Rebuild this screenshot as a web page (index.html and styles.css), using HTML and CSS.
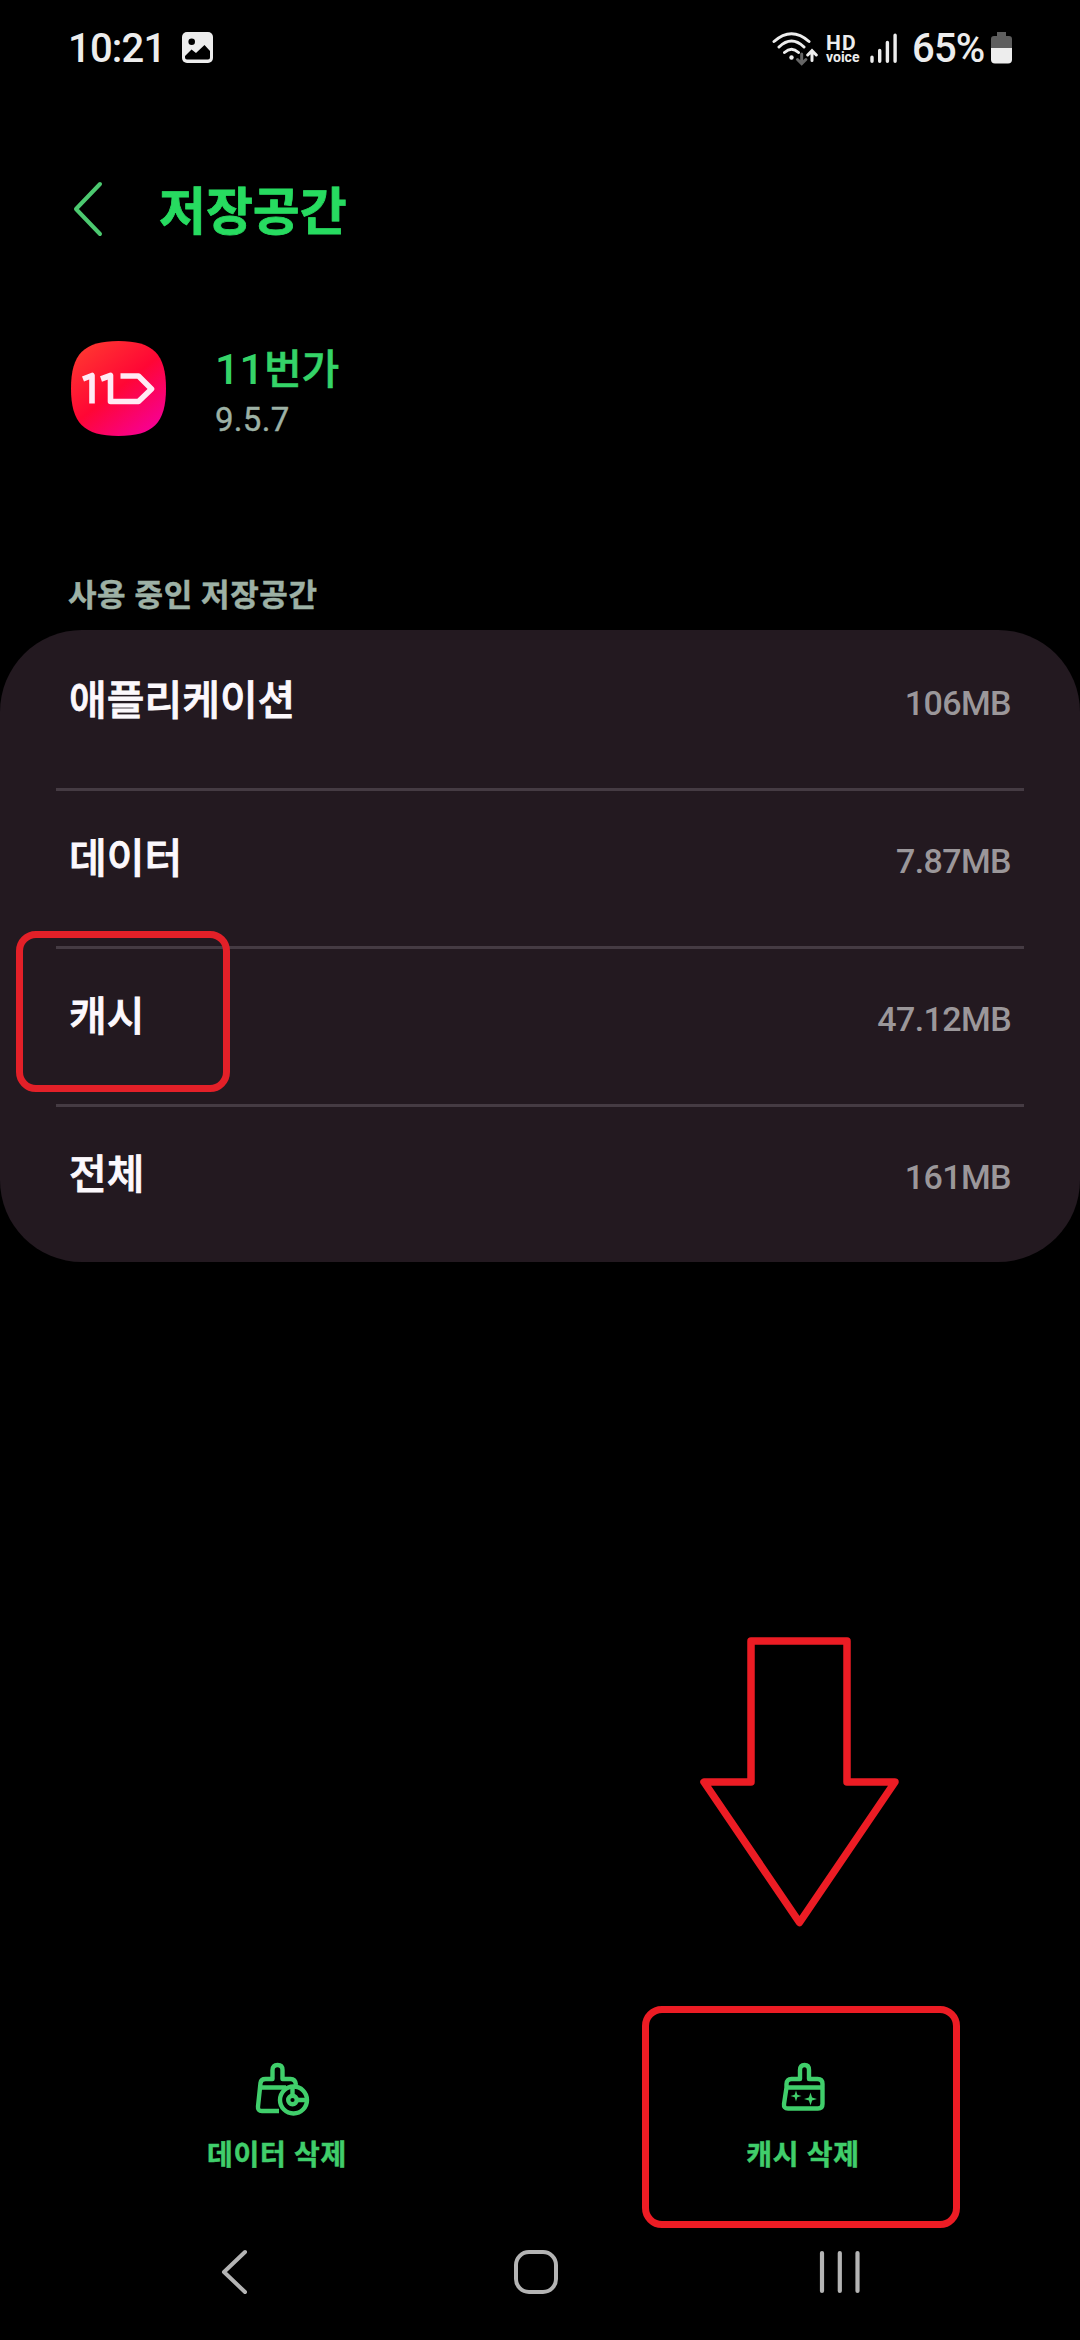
FILE: index.html
```html
<!DOCTYPE html>
<html lang="ko">
<head>
<meta charset="utf-8">
<title>저장공간</title>
<link rel="stylesheet" href="styles.css">
</head>
<body>
<div class="screen">
  <header class="status">
    <div class="status-side">
      <span class="clock">10:21</span>
      <svg class="photo" width="32" height="32" viewBox="0 0 32 32"><rect width="31" height="31" rx="5" fill="#ededed"/><circle cx="9.7" cy="9.7" r="3.3" fill="#000"/><path d="M3 24l6.500-6.500 4.500 3.500 8.500-8 5.500 6v6.500q0 2-2 2h-21q-2 0-2-2z" fill="#000"/></svg>
    </div>
    <div class="status-side">
      <svg width="46" height="36" viewBox="0 0 46 36" fill="none" stroke-linecap="round" stroke-width="3"><g stroke="#ededed"><path d="M2 11.500Q19.500-4 37 11.500M7 17Q19.500 5 32 17M12.500 22.500Q19.500 16 26.500 22.500"/></g><circle cx="19.500" cy="27.500" r="2.200" fill="#ededed"/><path d="M29.700 24v8M25.500 29.500l4.200 4.200 4.200-4.200" stroke="#666"/><path d="M40 30.500v-9M35.700 25l4.300-4.300 4.300 4.300" stroke="#ededed"/></svg>
      <span class="hd"><b>HD</b><small>voice</small></span>
      <svg class="signal" width="28" height="32" viewBox="0 0 28 32" stroke="#ededed" stroke-width="3.400" stroke-linecap="round"><path d="M2 25.200v4M9.700 18.500v10.700M17.400 10.500v18.700M25.100 3.200v26"/></svg>
      <span class="percent">65%</span>
      <svg class="battery" width="22" height="32" viewBox="0 0 22 32"><path d="M6 0h9v4h3q3 0 3 3v10H0V7q0-3 3-3h3z" fill="#5e5e5e"/><path d="M0 16h21v11.500q0 4-4 4H4q-4 0-4-4z" fill="#ededed"/></svg>
    </div>
  </header>

  <div class="titlebar">
    <svg width="30" height="56" viewBox="0 0 30 56" fill="none" stroke="#4cc970" stroke-width="4" stroke-linecap="round" stroke-linejoin="round"><path d="M27 3L3 28l24 25"/></svg>
    <h1>저장공간</h1>
  </div>

  <section class="app">
    <svg width="96" height="96" viewBox="0 0 96 96"><defs><linearGradient id="brand" x1=".1" y1="0" x2=".9" y2="1"><stop offset="0" stop-color="#ff3b30"/><stop offset=".5" stop-color="#ff0635"/><stop offset="1" stop-color="#f500a0"/></linearGradient></defs><path d="M47.500 0C82 0 95 13 95 47.500S82 95 47.500 95 0 82 0 47.500 13 0 47.500 0z" fill="url(#brand)"/><path d="M12 38L21 34.500v28M30 38L39.500 34.500v26h28L80.500 48 67.500 35h-18" fill="none" stroke="#ffeaf4" stroke-width="5.600" stroke-linejoin="round"/></svg>
    <div class="app-text"><div class="app-name"><span>11</span>번가</div><div class="version">9.5.7</div></div>
  </section>

  <h2>사용 중인 저장공간</h2>
  <section class="card">
    <div class="row"><span class="label">애플리케이션</span><span class="value">106MB</span></div>
    <div class="row"><span class="label">데이터</span><span class="value">7.87MB</span></div>
    <div class="row"><span class="label">캐시</span><span class="value">47.12MB</span></div>
    <div class="row"><span class="label">전체</span><span class="value">161MB</span></div>
  </section>

  <footer class="actions">
    <div class="action">
      <svg class="with-badge" width="56" height="56" viewBox="0 0 56 56" fill="none" stroke="#40ce6b" stroke-width="4.400" stroke-linejoin="round"><path d="M24 49H7q-4.500 0-4-4.500L5.500 21q.500-4 5-4h7V8q0-5 5-5t5 5v9h8q5 0 5.500 6M5 25.500h26"/><circle cx="38.500" cy="38" r="13.500"/><circle cx="37.500" cy="38" r="4.300"/><path d="M37.500 33.500V24M42 38h9"/></svg>
      <span>데이터 삭제</span>
    </div>
    <div class="action">
      <svg width="56" height="56" viewBox="0 0 56 56" fill="none" stroke="#40ce6b" stroke-width="4.400" stroke-linejoin="round"><path d="M11.500 25.500V22q0-5 5-5H25V8q0-5 4.500-5T34 8v9h8.500q5 0 5 5v20q0 4.500-4.500 4.500H13q-4.500 0-4-4.500zM11.500 25.500h36"/><path d="M21 28.500l1.300 4.200 4.200 1.300-4.200 1.300L21 39.500l-1.300-4.200-4.200-1.300 4.200-1.300zM35.500 30.500l1.600 4.900 4.900 1.600-4.900 1.600-1.600 4.900-1.600-4.900L29 37l4.900-1.600z" fill="#40ce6b" stroke="none"/></svg>
      <span>캐시 삭제</span>
    </div>
  </footer>

  <nav class="nav">
    <svg width="28" height="46" viewBox="0 0 28 46" fill="none" stroke="#b4b4b4" stroke-width="4" stroke-linecap="round" stroke-linejoin="round"><path d="M24 3L3 23l21 20"/></svg>
    <svg class="home" width="46" height="46" viewBox="0 0 46 46" fill="none" stroke="#b4b4b4" stroke-width="4"><rect x="3" y="3" width="40" height="40" rx="13"/></svg>
    <svg width="42" height="46" viewBox="0 0 42 46" stroke="#b4b4b4" stroke-width="4.200" stroke-linecap="round"><path d="M3 4v38M20.800 4v38M38.500 4v38"/></svg>
  </nav>

  <div class="mark mark-cache"></div>
  <div class="mark mark-button"></div>
  <svg class="arrow" width="200" height="292" viewBox="0 0 200 292" fill="none" stroke="#ec1c24" stroke-width="7.500" stroke-linejoin="round"><path d="M51 5h96v141h48L99.500 286.500 4 146h47z"/></svg>
</div>
</body>
</html>
```

FILE: styles.css
```css
* { box-sizing: border-box; }
body { margin: 0; background: #000; }
svg { display: block; flex: none; }
.screen {
  position: relative;
  width: 1080px;
  height: 2340px;
  overflow: hidden;
  display: flex;
  flex-direction: column;
  background: #000;
  font-family: Roboto, "Noto Sans CJK KR", sans-serif;
  white-space: nowrap;
}
.status {
  height: 96px;
  padding: 0 67px 0 68px;
  display: flex;
  justify-content: space-between;
  align-items: center;
  color: #ededed;
}
.status-side { display: flex; align-items: center; }
.clock { width: 114px; font-size: 40px; font-weight: 500; letter-spacing: -0.8px; }
.hd {
  display: flex;
  flex-direction: column;
  width: 36px;
  margin: 0 8px;
}
.hd b { font-size: 21px; line-height: 17px; letter-spacing: 1.2px; }
.hd small { font-size: 14px; line-height: 10px; font-weight: 700; }
.percent { width: 79px; margin-left: 14px; font-size: 40px; font-weight: 500; letter-spacing: -0.8px; }
.titlebar {
  height: 226px;
  padding: 0 73px;
  display: flex;
  align-items: center;
  gap: 56px;
}
h1 { margin: 0; padding-top: 7px; font-size: 51px; line-height: 60px; font-weight: 700; color: #27db60; -webkit-text-stroke: 0.8px; }
.app { height: 240px; padding: 19px 71px 0; display: flex; gap: 48px; }
.app-text { padding-top: 4px; }
.app-name { font-size: 41px; line-height: 48px; font-weight: 500; color: #35d468; -webkit-text-stroke: 0.6px; }
.app-name span { font-size: 43px; -webkit-text-stroke: 0; }
.version { padding-top: 2px; font-size: 33px; line-height: 48px; letter-spacing: 0.3px; color: #9db1a5; -webkit-text-stroke: 0.4px; }
h2 { margin: 0; height: 68px; padding: 14px 68px 0; font-size: 31px; line-height: 40px; font-weight: 700; letter-spacing: 0.6px; color: #9db1a5; -webkit-text-stroke: 0.5px; }
.card { height: 632px; border-radius: 82px; background: #231920; }
.row {
  height: 158px;
  margin: 0 56px;
  padding: 0 13px 25px;
  display: flex;
  align-items: center;
  justify-content: space-between;
}
.row + .row { box-shadow: inset 0 3px #453b43; }
.label { font-size: 41px; font-weight: 500; color: #fcf8fc; -webkit-text-stroke: 0.8px; }
.value { padding-top: 13px; font-size: 34px; font-weight: 500; letter-spacing: -0.6px; color: #9b979a; }
.actions { flex: 1; padding: 0 14px; display: flex; align-items: flex-end; }
.action { flex: 1; height: 149px; padding-top: 7px; display: flex; flex-direction: column; align-items: center; color: #40ce6b; }
.with-badge { margin-left: 11px; }
.action span { margin-top: 18px; font-size: 28px; line-height: 40px; font-weight: 700; letter-spacing: 0.7px; -webkit-text-stroke: 0.5px; }
.nav { height: 136px; padding: 0 219px 0 221px; display: flex; align-items: center; justify-content: space-between; }
.home { margin-left: 4px; }
.mark { position: absolute; border: 7px solid #ec1c24; border-radius: 20px; }
.mark-cache { left: 16px; top: 931px; width: 214px; height: 161px; border-color: #e32028; }
.mark-button { left: 642px; top: 2006px; width: 318px; height: 222px; }
.arrow { position: absolute; left: 700px; top: 1636px; }
```
